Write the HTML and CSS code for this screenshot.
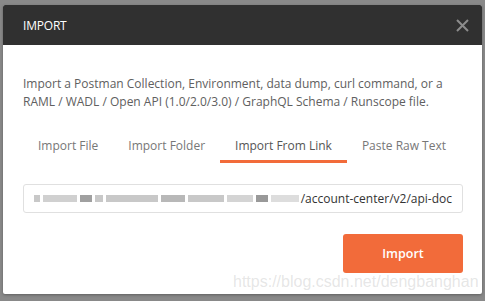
FILE: index.html
```html
<!DOCTYPE html>
<html>
<head>
<meta charset="utf-8">
<link rel="stylesheet" href="styles.css">
</head>
<body>
<div class="modal">
  <div class="modal-header">
    <span class="modal-title">IMPORT</span>
    <svg class="close" width="13" height="13" viewBox="0 0 13 13"><path d="M1 1L12 12M12 1L1 12" stroke="#8c8c8c" stroke-width="2"/></svg>
  </div>
  <div class="modal-body">
    <p class="desc">Import a Postman Collection, Environment, data dump, curl command, or a RAML / WADL / Open API (1.0/2.0/3.0) / GraphQL Schema / Runscope file.</p>
    <div class="tabs">
      <div class="tab">Import File</div>
      <div class="tab">Import Folder</div>
      <div class="tab active">Import From Link</div>
      <div class="tab">Paste Raw Text</div>
    </div>
    <div class="input">
      <span class="blur">
        <i class="b1"></i><i class="b2"></i><i class="b3"></i><i class="b4"></i><i class="b5"></i><i class="b6"></i><i class="b7"></i><i class="b8"></i><i class="b9"></i><i class="b10"></i>
      </span>
      <span class="url">/account-center/v2/api-doc</span>
    </div>
    <div class="actions">
      <button class="btn">Import</button>
    </div>
  </div>
  <div class="watermark">https://blog.csdn.net/dengbanghan</div>
</div>
</body>
</html>
```
FILE: styles.css
```css
html, body {
  margin: 0;
  padding: 0;
  background: #898989;
  width: 485px;
  height: 301px;
  overflow: hidden;
  font-family: "Open Sans", "Noto Sans", sans-serif;
}
.modal {
  position: relative;
  margin: 5px 0 0 3px;
  width: 479px;
  height: 289px;
  background: #fff;
  border-radius: 2px;
  box-shadow: 0 1px 3px rgba(0,0,0,0.3);
  overflow: hidden;
}
.modal-header {
  height: 40px;
  background: #303030;
  display: flex;
  align-items: center;
  justify-content: space-between;
  padding: 0 13px 0 20px;
}
.modal-title {
  color: #fff;
  font-size: 12px;
  letter-spacing: -0.2px;
}
.close {
  display: block;
}
.modal-body {
  padding: 0 19px 0 20px;
}
.desc {
  margin: 30px 0 0;
  font-size: 12px;
  line-height: 18px;
  color: #606060;
}
.tabs {
  display: flex;
  margin-top: 21px;
  height: 31px;
}
.tab {
  flex: none;
  white-space: nowrap;
  padding: 0 15px;
  font-size: 12px;
  color: #777;
  line-height: 28px;
  border-bottom: 3px solid transparent;
}
.tab.active {
  color: #555;
  border-bottom-color: #f26b3a;
}
.input {
  margin-top: 21px;
  height: 29px;
  box-sizing: border-box;
  border: 1px solid #e0e0e0;
  border-radius: 3px;
  display: flex;
  align-items: center;
  padding: 0 10px;
  font-size: 12px;
  color: #333;
  overflow: hidden;
}
.blur {
  display: flex;
  align-items: center;
  gap: 3px;
  flex: 1;
}
.blur i {
  display: block;
  height: 7px;
  background: #c8c8c8;
}
.b1 { width: 6px; }
.b2 { width: 34px; background: #d0d0d0 !important; }
.b3 { width: 12px; background: #a0a0a0 !important; }
.b4 { width: 8px; }
.b5 { width: 52px; }
.b6 { width: 24px; background: #b8b8b8 !important; }
.b7 { width: 36px; }
.b8 { width: 26px; background: #d4d4d4 !important; }
.b9 { width: 12px; background: #999 !important; }
.b10 { width: 28px; background: #ddd !important; }
.url {
  flex: none;
  white-space: nowrap;
}
.actions {
  display: flex;
  justify-content: flex-end;
  margin-top: 21px;
}
.btn {
  width: 120px;
  height: 39px;
  border: none;
  border-radius: 3px;
  background: #f26b3a;
  color: #fff;
  font-family: "Open Sans", "Noto Sans", sans-serif;
  font-size: 12.5px;
  font-weight: 600;
}
.watermark {
  position: absolute;
  left: 230px;
  top: 268px;
  font-family: "Liberation Sans", Arial, sans-serif;
  font-size: 16px;
  color: rgba(170,170,170,0.3);
  white-space: nowrap;
}
```
